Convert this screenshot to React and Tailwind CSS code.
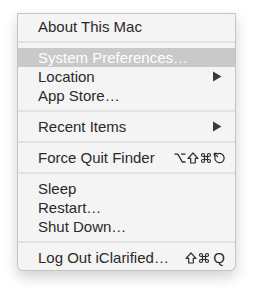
const Opt = () => (
  <svg width="12" height="12" viewBox="0 0 12 12" fill="none" stroke="#2e2e2e" strokeWidth="1.3">
    <path d="M0.5 2.2 H3.8 L8.4 10 H11.5 M7 2.2 H11.5" />
  </svg>
);

const Shift = () => (
  <svg width="12" height="12" viewBox="0 0 12 12" fill="none" stroke="#2e2e2e" strokeWidth="1.2" strokeLinejoin="round">
    <path d="M6 1 L11 6.3 H8.3 V11 H3.7 V6.3 H1 Z" />
  </svg>
);

const Cmd = () => (
  <svg width="12" height="12" viewBox="0 0 24 24" fill="none" stroke="#2e2e2e" strokeWidth="2.4">
    <path d="M15 6v12a3 3 0 1 0 3-3H6a3 3 0 1 0 3 3V6a3 3 0 1 0-3 3h12a3 3 0 1 0-3-3" />
  </svg>
);

const Esc = () => (
  <svg width="12" height="12" viewBox="0 0 12 12" fill="none" stroke="#2e2e2e" strokeWidth="1.2" strokeLinecap="round">
    <path d="M2.3 4.2 A4.6 4.6 0 1 0 4.6 1.9" />
    <path d="M1.3 1.3 L4.6 4.6 M1.3 1.3 H3.9 M1.3 1.3 V3.9" />
  </svg>
);

export default function App() {
  const items = [
    { label: "About This Mac" },
    { sep: true },
    { label: "System Preferences…", active: true },
    { label: "Location", arrow: true },
    { label: "App Store…" },
    { sep: true },
    { label: "Recent Items", arrow: true },
    { sep: true },
    { label: "Force Quit Finder", keys: [<Opt key="o" />, <Shift key="s" />, <Cmd key="c" />, <Esc key="e" />] },
    { sep: true },
    { label: "Sleep" },
    { label: "Restart…" },
    { label: "Shut Down…" },
    { sep: true },
    { label: "Log Out iClarified…", keys: [<Shift key="s" />, <Cmd key="c" />], letter: "Q" },
  ];

  return (
    <div className="w-[253px] h-[292px] bg-white pt-[13px] pl-[17px]">
      <div
        className="w-[219px] bg-[#f4f4f4] border border-[#c4c4c4] rounded-b-[6px] py-[3px] shadow-[0_6px_14px_rgba(0,0,0,0.18)] text-[15px] text-[#2a2a2a]"
        style={{ fontFamily: '"Liberation Sans", "DejaVu Sans", sans-serif' }}
      >
        {items.map((item, i) =>
          item.sep ? (
            <div key={i} className="h-[12px] flex items-center">
              <div className="w-full h-[2px] bg-[#e3e3e3]" />
            </div>
          ) : (
            <div
              key={i}
              className={`h-[19px] flex items-center justify-between pl-[20px] pr-[10px] ${
                item.active ? "bg-[#c9c9c9] text-white" : ""
              }`}
            >
              <span className="leading-none">{item.label}</span>
              {item.arrow && (
                <svg width="10" height="11" viewBox="0 0 10 11" className="mr-[3px]">
                  <path d="M1 0.5 L9.5 5.5 L1 10.5 Z" fill="#3a3a3a" />
                </svg>
              )}
              {item.keys && (
                <span className="flex items-center gap-[1px] leading-none">
                  {item.keys}
                  {item.letter && <span className="ml-[2px]">{item.letter}</span>}
                </span>
              )}
            </div>
          )
        )}
      </div>
    </div>
  );
}
